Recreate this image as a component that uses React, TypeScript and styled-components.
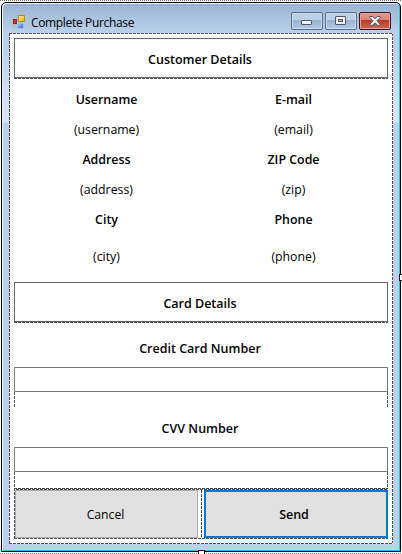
import React from "react";
import styled, { createGlobalStyle, css } from "styled-components";

const GlobalStyle = createGlobalStyle`
  * { box-sizing: border-box; }
  html, body { margin: 0; padding: 0; background: #fff; overflow: hidden; }
  button, input { font: inherit; color: inherit; margin: 0; border-radius: 0; outline: none; }
`;

const dashX = "repeating-linear-gradient(90deg, #505054 0 3px, #fff 3px 4px)";
const dashY = "repeating-linear-gradient(180deg, #505054 0 3px, #fff 3px 4px)";
const dots = "repeating-linear-gradient(90deg, #6b6b6b 0 1px, #fff 1px 2px)";

const Surface = styled.div`
  position: relative;
  width: 402px;
  height: 554px;
  padding: 2px 1px 2px 1px;
  background: ${dots} 0 0 / 100% 1px no-repeat, ${dots} 0 553px / 100% 1px no-repeat, #fff;
  font: 12px "Open Sans", "Noto Sans", sans-serif;
  color: #000;
`;

const Window = styled.div`
  display: flex;
  flex-direction: column;
  width: 400px;
  height: 550px;
  border: 1px solid #000;
  border-radius: 5px 5px 0 0;
  padding: 0 6px 6px 7px;
  background: linear-gradient(180deg, #99b4d1 0, #b9d1ea 30px, #b9d1ea 45px, #cddff0 85px, #d7e6f4 119px, #b9d1ea 120px);
  box-shadow: inset 1px 1px 0 #eaf3fb, inset -1px -1px 0 #28c4e4;
`;

const TitleBar = styled.header`
  display: flex;
  align-items: flex-start;
  height: 30px;
  padding: 11px 3px 0 3px;
`;

const Title = styled.h1`
  margin: 0 0 0 5px;
  font-size: 12px;
  line-height: 17px;
  font-weight: 400;
  letter-spacing: -0.34px;
  flex: 1;
  white-space: nowrap;
`;

const Controls = styled.div`
  display: flex;
  gap: 2px;
  margin-top: -2px;
`;

const ControlButton = styled.button<{ $danger?: boolean }>`
  width: 32px;
  height: 18px;
  padding: 0;
  display: grid;
  place-items: center;
  border: 1px solid #5b6e8a;
  border-radius: 2px;
  box-shadow: inset 0 0 0 1px #c8daeb;
  background: linear-gradient(#bdd1e6 0 45%, #96b2d1 46%, #b1cbe4);
  ${(p) => p.$danger && css`
    border-color: #43141d;
    box-shadow: inset 0 0 0 1px #dda59f;
    background: linear-gradient(#e29b91 0, #d78177 45%, #b83c24 46%, #cc6951);
  `}
  svg { display: block; }
`;

const Client = styled.main`
  width: 384px;
  height: 511px;
  padding: 5px;
  background:
    ${dashX} 0 0 / 100% 1px no-repeat,
    ${dashX} 0 100% / 100% 1px no-repeat,
    ${dashY} 0 0 / 1px 100% no-repeat,
    ${dashY} 100% 0 / 1px 100% no-repeat,
    #fff;
`;

const SectionHeading = styled.h2`
  height: 40px;
  margin: 0;
  padding: 2px 2px 0 0;
  border: 1px solid #646464;
  font-size: 12.5px;
  line-height: 37px;
  font-weight: 600;
  text-align: center;
`;

const Divider = styled.div`
  height: 1px;
  background: ${dashX};
`;

const DetailsGrid = styled.dl`
  display: grid;
  grid-template-columns: 187px 187px;
  grid-template-rows: repeat(5, 30px) 44px;
  margin: 0;
  padding: 6px 0 3px;
  height: 203px;
  text-align: center;
`;

const Term = styled.dt`
  align-self: center;
  padding-right: 2px;
  font-size: 12.4px;
  font-weight: 600;
  line-height: 18px;
`;

const Value = styled.dd`
  margin: 0;
  align-self: center;
  padding-right: 2px;
  font-size: 12.3px;
  line-height: 18px;
`;

const Field = styled.label<{ $height: number; $labelHeight: number; $tail: number }>`
  display: flex;
  flex-direction: column;
  height: ${(p) => p.$height}px;
  background:
    ${dashY} 0 ${(p) => p.$labelHeight + 25}px / 1px ${(p) => p.$tail}px no-repeat,
    ${dashY} 100% ${(p) => p.$labelHeight + 25}px / 1px ${(p) => p.$tail}px no-repeat;
`;

const FieldName = styled.span<{ $height: number }>`
  height: ${(p) => p.$height}px;
  padding: 0 2px 9px 0;
  display: flex;
  align-items: flex-end;
  justify-content: center;
  font-size: 12.5px;
  font-weight: 600;
  line-height: 18px;
`;

const TextBox = styled.input`
  width: 100%;
  height: 25px;
  padding: 2px 4px;
  border: 1px solid #7a7a7a;
  background: #fff;
`;

const Actions = styled.div`
  display: grid;
  grid-template-columns: 187px 3px 184px;
  height: 51px;
  padding: 2px 0 1px;
  background:
    ${dashX} 0 0 / 100% 1px no-repeat,
    ${dashX} 2px 1px / 100% 1px no-repeat,
    ${dashX} 0 100% / 100% 1px no-repeat,
    ${dashY} 0 0 / 1px 100% no-repeat;
`;

const ActionGap = styled.div`
  background: ${dashY};
  width: 1px;
`;

const ActionButton = styled.button<{ $primary?: boolean }>`
  height: 48px;
  padding: 1px 4px 0 0;
  border: 1px solid #adadad;
  background: #e1e1e1;
  font-size: 12.2px;
  ${(p) => p.$primary
    ? css`border: 2px solid #0078d7; font-weight: 600; font-size: 12.5px; letter-spacing: -0.1px;`
    : css`margin-left: 1px; width: 183px; padding-right: 2px;`}
`;

const ResizeHandle = styled.span<{ $edge: "right" | "bottom" }>`
  position: absolute;
  width: 7px;
  height: 7px;
  border: 1px solid #000;
  background: #fff;
  ${(p) => (p.$edge === "right" ? "left: 399px; top: 274px;" : "left: 198px; top: 550px;")}
`;

const FormIconSvg = styled.svg`
  margin-top: 1px;
`;

const FormIcon = () => (
  <FormIconSvg width="14" height="14" viewBox="0 0 14 14" aria-hidden="true">
    <defs>
      <linearGradient id="gold" x2="1" y2="1"><stop stopColor="#fff3a5" /><stop offset="1" stopColor="#edae00" /></linearGradient>
      <linearGradient id="blue" y2="1"><stop stopColor="#a4cdff" /><stop offset="1" stopColor="#2e65d4" /></linearGradient>
    </defs>
    <path d="M.5.5h5v3M.5.5v12h5M.5 10h5" fill="none" stroke="#b3b8be" />
    <rect x="6.5" y=".5" width="6" height="6" fill="url(#gold)" stroke="#b98a22" />
    <rect x="1.5" y="4.5" width="3" height="4" fill="#cf3028" stroke="#a3221c" />
    <rect x="6" y="9" width="5" height="4" fill="url(#blue)" stroke="#6d91d5" strokeWidth=".5" />
  </FormIconSvg>
);

const MinimizeIcon = () => (
  <svg width="12" height="10" viewBox="0 0 12 10" aria-hidden="true">
    <rect x=".5" y="4.5" width="10" height="4" rx=".5" fill="#f5f5f5" stroke="#535666" />
  </svg>
);

const MaximizeIcon = () => (
  <svg width="12" height="10" viewBox="0 0 12 10" aria-hidden="true">
    <rect x=".5" y=".5" width="10" height="8" rx=".5" fill="#f5f5f5" stroke="#535666" />
    <rect x="3.5" y="3.5" width="4" height="2" fill="#9db9d7" stroke="#535666" />
  </svg>
);

const CloseIcon = () => (
  <svg width="12" height="10" viewBox="0 0 12 10" aria-hidden="true">
    <path d="M.8.5h3L6 2.8 8.2.5h3v1L8 4.8l3.2 3.4v1h-3L6 6.8 3.8 9.2h-3v-1L4 4.8.8 1.5Z" fill="#f5f5f5" stroke="#535666" />
  </svg>
);

type Entry = { text: string; head?: boolean };
const entries: Entry[] = [
  { text: "Username", head: true },
  { text: "E-mail", head: true },
  { text: "(username)" },
  { text: "(email)" },
  { text: "Address", head: true },
  { text: "ZIP Code", head: true },
  { text: "(address)" },
  { text: "(zip)" },
  { text: "City", head: true },
  { text: "Phone", head: true },
  { text: "(city)" },
  { text: "(phone)" },
];

export default function App() {
  return (
    <>
      <GlobalStyle />
      <Surface>
        <Window>
          <TitleBar>
            <FormIcon />
            <Title>Complete Purchase</Title>
            <Controls>
              <ControlButton aria-label="Minimize"><MinimizeIcon /></ControlButton>
              <ControlButton aria-label="Maximize"><MaximizeIcon /></ControlButton>
              <ControlButton aria-label="Close" $danger><CloseIcon /></ControlButton>
            </Controls>
          </TitleBar>
          <Client>
            <SectionHeading>Customer Details</SectionHeading>
            <Divider />
            <DetailsGrid>
              {entries.map((e) =>
                e.head
                  ? <Term key={e.text}>{e.text}</Term>
                  : <Value key={e.text}>{e.text}</Value>
              )}
            </DetailsGrid>
            <SectionHeading>Card Details</SectionHeading>
            <Divider />
            <Field $height={84} $labelHeight={44} $tail={15}>
              <FieldName $height={44}>Credit Card Number</FieldName>
              <TextBox aria-label="Credit Card Number" />
            </Field>
            <Field $height={81} $labelHeight={40} $tail={16}>
              <FieldName $height={40}>CVV Number</FieldName>
              <TextBox aria-label="CVV Number" />
            </Field>
            <Actions>
              <ActionButton>Cancel</ActionButton>
              <ActionGap />
              <ActionButton $primary>Send</ActionButton>
            </Actions>
          </Client>
        </Window>
        <ResizeHandle $edge="right" />
        <ResizeHandle $edge="bottom" />
      </Surface>
    </>
  );
}
